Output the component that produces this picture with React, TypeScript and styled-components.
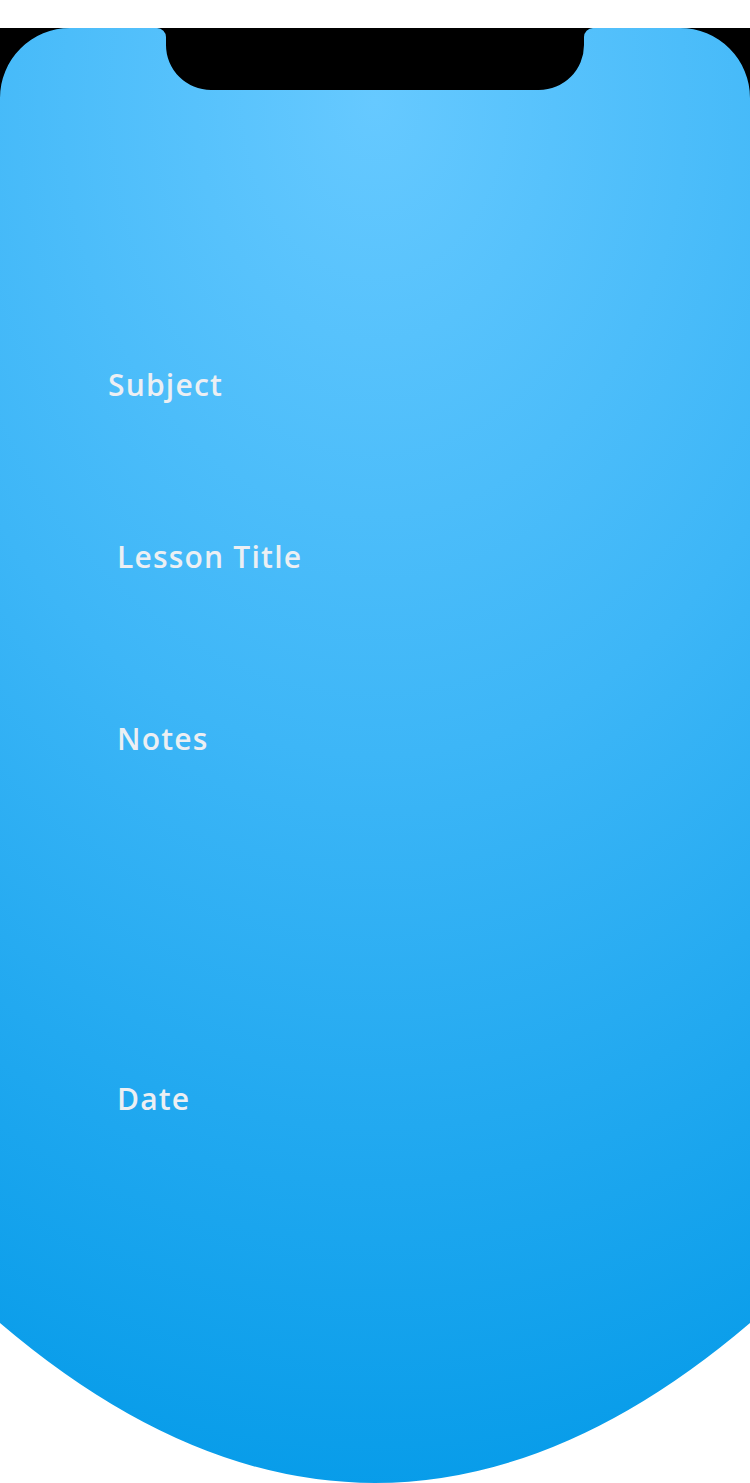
import React from 'react'
import styled, { createGlobalStyle } from 'styled-components'

const GlobalStyle = createGlobalStyle`
  html, body {
    margin: 0;
    padding: 0;
    background: #fff;
  }
  #root {
    padding-top: 28px;
  }
`

// phone screen outline: rounded top, notch, parabolic chin
const screenShape = `path('M 0 70 A 70 70 0 0 1 70 0 L 157 0 A 9 9 0 0 1 166 9 L 166 17 A 45 45 0 0 0 211 62 L 539 62 A 45 45 0 0 0 584 17 L 584 9 A 9 9 0 0 1 593 0 L 680 0 A 70 70 0 0 1 750 70 L 750 1295 Q 375 1615 0 1295 Z')`

const Frame = styled.div`
  width: 750px;
  background: linear-gradient(#000 0 120px, #fff 120px);
`

const Screen = styled.main`
  box-sizing: border-box;
  width: 750px;
  height: 1455px;
  padding-top: 339px;
  clip-path: ${screenShape};
  background: radial-gradient(145% 100% at 50% 5%, #66c9ff 0%, #3db6f7 45%, #039ae8 100%);
  display: flex;
  flex-direction: column;
`

const Field = styled.section<{ $indent: number }>`
  display: flex;
  flex-direction: column;
  padding-left: ${(p) => p.$indent}px;
`

const Label = styled.label`
  font-family: 'Open Sans', 'Liberation Sans', sans-serif;
  font-weight: 600;
  font-size: 30px;
  line-height: 36px;
  letter-spacing: 1.2px;
  color: #eceff3;
`

const InputSlot = styled.div<{ $height: number }>`
  height: ${(p) => p.$height}px;
`

const fields = [
  { label: 'Subject', indent: 108, space: 136 },
  { label: 'Lesson Title', indent: 117, space: 146 },
  { label: 'Notes', indent: 117, space: 324 },
  { label: 'Date', indent: 117, space: 200 },
]

const App: React.FC = () => (
  <>
    <GlobalStyle />
    <Frame>
      <Screen>
        {fields.map((f) => (
          <Field key={f.label} $indent={f.indent}>
            <Label>{f.label}</Label>
            <InputSlot $height={f.space} />
          </Field>
        ))}
      </Screen>
    </Frame>
  </>
)

export default App
